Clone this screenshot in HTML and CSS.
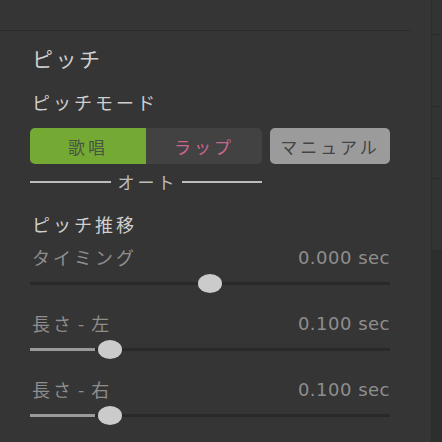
FILE: index.html
```html
<!DOCTYPE html>
<html lang="ja">
<head>
<meta charset="utf-8">
<link rel="stylesheet" href="styles.css">
</head>
<body>
<div class="app">
  <div class="main">
    <div class="topbar"></div>
    <div class="content">
      <div class="title">ピッチ</div>
      <div class="heading mode">ピッチモード</div>
      <div class="mode-row">
        <div class="seg">
          <div class="seg-btn seg-on">歌唱</div>
          <div class="seg-btn seg-off">ラップ</div>
        </div>
        <div class="manual">マニュアル</div>
      </div>
      <div class="auto"><span class="auto-line"></span><span class="auto-text">オート</span><span class="auto-line"></span></div>
      <div class="heading section">ピッチ推移</div>

      <div class="slider">
        <div class="slider-head"><span class="slider-label">タイミング</span><span class="slider-value">0.000 sec</span></div>
        <div class="track-wrap">
          <div class="track"></div>
          <div class="thumb" style="left: 50%"></div>
        </div>
      </div>

      <div class="slider">
        <div class="slider-head"><span class="slider-label">長さ - 左</span><span class="slider-value">0.100 sec</span></div>
        <div class="track-wrap">
          <div class="track"><div class="fill" style="width: 18%"></div></div>
          <div class="thumb" style="left: 22.2%"></div>
        </div>
      </div>

      <div class="slider">
        <div class="slider-head"><span class="slider-label">長さ - 右</span><span class="slider-value">0.100 sec</span></div>
        <div class="track-wrap">
          <div class="track"><div class="fill" style="width: 18%"></div></div>
          <div class="thumb" style="left: 22.2%"></div>
        </div>
      </div>
    </div>
  </div>
  <div class="side">
    <div class="side-cell first"></div>
    <div class="side-cell"></div>
    <div class="side-cell"></div>
    <div class="side-cell"></div>
    <div class="side-rest"></div>
  </div>
</div>
</body>
</html>
```

FILE: styles.css
```css
html, body {
  margin: 0;
  padding: 0;
  background: #353535;
  width: 442px;
  height: 442px;
  overflow: hidden;
  font-family: "Noto Sans CJK JP", "DejaVu Sans", sans-serif;
}

.app {
  display: flex;
  height: 442px;
}

.main {
  width: 431px;
  flex: none;
}

.topbar {
  height: 30px;
  width: 410px;
  border-bottom: 1px solid #2b2b2b;
}

.content {
  padding: 0 41px 0 30px;
}

.title {
  font-size: 21px;
  line-height: 24px;
  letter-spacing: 2.5px;
  color: #cfcfcf;
  margin-top: 15px;
  padding-left: 2px;
}

.heading {
  font-size: 18px;
  line-height: 24px;
  letter-spacing: 3px;
  color: #cfcfcf;
  padding-left: 2px;
}

.mode {
  margin-top: 20px;
}

.mode-row {
  display: flex;
  margin-top: 14px;
  height: 36px;
}

.seg {
  display: flex;
  width: 232px;
  border-radius: 5px;
  overflow: hidden;
}

.seg-btn {
  flex: 1;
  display: flex;
  align-items: center;
  justify-content: center;
  font-size: 17px;
  letter-spacing: 3px;
}

.seg-on {
  background: #74aa34;
  color: #485640;
}

.seg-off {
  background: #424242;
  color: #c9678f;
}

.manual {
  margin-left: 8px;
  width: 120px;
  border-radius: 5px;
  background: #9b9b9b;
  color: #444444;
  font-size: 17px;
  letter-spacing: 3px;
  display: flex;
  align-items: center;
  justify-content: center;
}

.auto {
  display: flex;
  align-items: center;
  width: 232px;
  height: 12px;
  margin-top: 12px;
}

.auto-line {
  flex: 1;
  height: 2px;
  background: #bdbdbd;
}

.auto-text {
  font-size: 17px;
  line-height: 12px;
  letter-spacing: 3px;
  color: #bdbdbd;
  padding: 0 4px 0 7px;
}

.section {
  margin-top: 24px;
}

.slider {
  margin-top: 9px;
}

.slider + .slider {
  margin-top: 16px;
}

.slider-head {
  display: flex;
  justify-content: space-between;
  align-items: center;
  height: 24px;
}

.slider-label {
  font-size: 18px;
  letter-spacing: 3px;
  word-spacing: -3px;
  color: #8e8e8e;
  padding-left: 2px;
}

.slider-value {
  font-family: "DejaVu Sans", sans-serif;
  font-size: 18px;
  letter-spacing: 0.5px;
  word-spacing: 0;
  color: #8e8e8e;
}

.track-wrap {
  position: relative;
  height: 24px;
  margin-top: 2px;
}

.track {
  position: absolute;
  left: 0;
  right: 0;
  top: 11px;
  height: 3px;
  background: #292929;
}

.fill {
  height: 100%;
  background: #9a9a9a;
}

.thumb {
  position: absolute;
  top: 3px;
  width: 24px;
  height: 19px;
  margin-left: -12px;
  border-radius: 50%;
  background: #cbcbcb;
}

.side {
  flex: 1;
  display: flex;
  flex-direction: column;
  border-left: 1px solid #2b2b2b;
  background: #333333;
}

.side-cell {
  height: 71px;
  border-bottom: 1px solid #2b2b2b;
}

.side-cell.first {
  height: 34px;
}

.side-rest {
  flex: 1;
  background: #2e2e2e;
}
```
